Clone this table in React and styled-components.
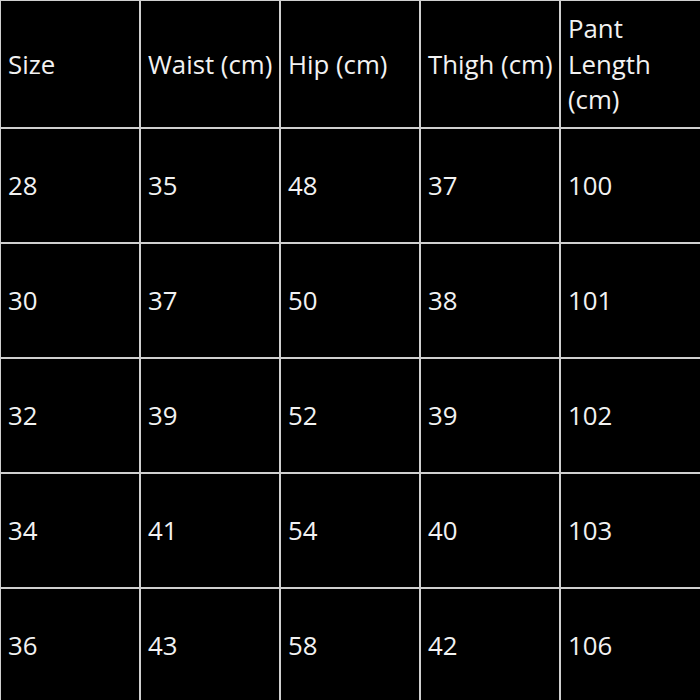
import React from "react";
import styled, { createGlobalStyle } from "styled-components";

const Global = createGlobalStyle`
  html, body { margin: 0; padding: 0; background: #000; }
  body { width: 700px; height: 700px; overflow: hidden; }
`;

const Table = styled.div`
  width: 700px;
  height: 700px;
  overflow: hidden;
  box-sizing: border-box;
  background: #cfcfcf;
  padding: 1px 0 0 1px;
  display: grid;
  grid-template-columns: 138px 138px 138px 138px 1fr;
  grid-template-rows: 126px repeat(5, 113px);
  gap: 2px;
`;

const Cell = styled.div`
  background: #000;
  color: #f2f2f2;
  font-family: "Open Sans", "Noto Sans", sans-serif;
  font-size: 25.8px;
  line-height: 35.5px;
  display: flex;
  align-items: center;
  padding: 1px 0 0 7px;
  white-space: pre-line;
  overflow: hidden;
`;

const header = ["Size", "Waist (cm)", "Hip (cm)", "Thigh (cm)", "Pant\nLength\n(cm)"];
const rows = [
  ["28", "35", "48", "37", "100"],
  ["30", "37", "50", "38", "101"],
  ["32", "39", "52", "39", "102"],
  ["34", "41", "54", "40", "103"],
  ["36", "43", "58", "42", "106"],
];

export default function App() {
  return (
    <>
      <Global />
      <Table>
        {header.map((h, i) => (
          <Cell key={"h" + i}>{h}</Cell>
        ))}
        {rows.map((r, ri) =>
          r.map((c, ci) => <Cell key={ri + "-" + ci}>{c}</Cell>)
        )}
      </Table>
    </>
  );
}
